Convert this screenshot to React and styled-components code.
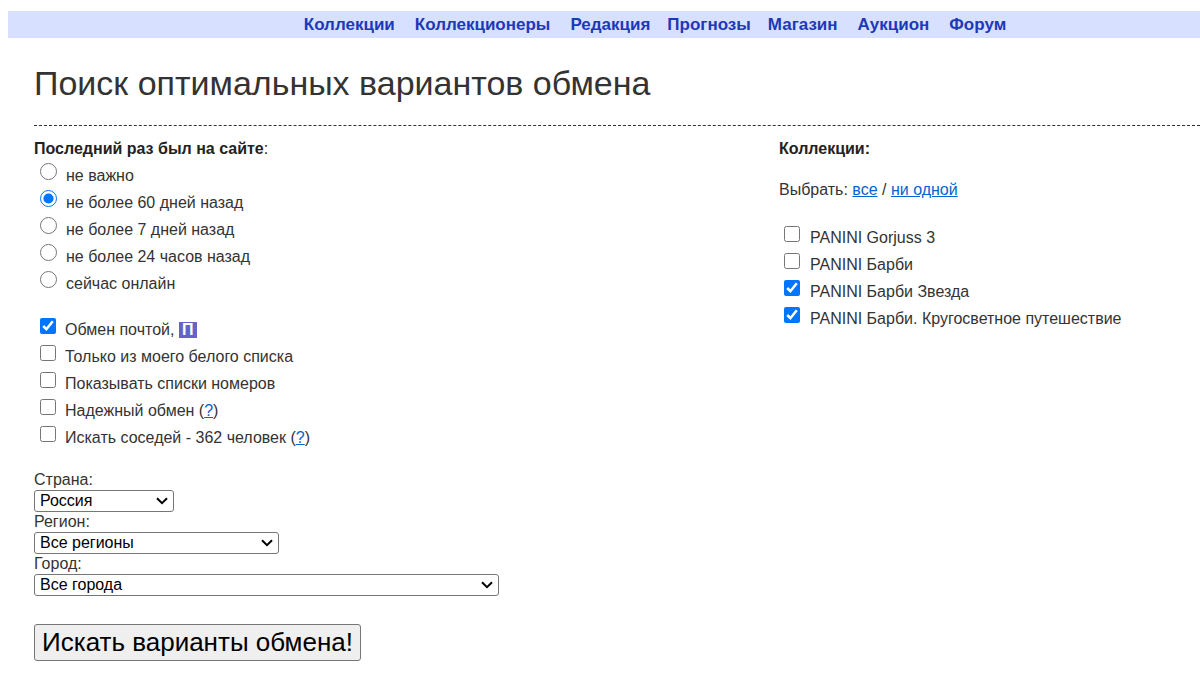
import styled, { createGlobalStyle } from "styled-components";
import { useState } from "react";

const GlobalStyle = createGlobalStyle`
  body {
    margin: 0;
    background: #fff;
    color: #333;
    font-family: "Liberation Sans", Arial, sans-serif;
    font-size: 16px;
    line-height: 20px;
  }
`;
const Page = styled.div`
  padding: 11px 0 16px 8px;
`;
const Nav = styled.nav`
  display: flex;
  justify-content: center;
  background-color: #d7e0ff;
  padding-left: 102px;
  line-height: 27px;
`;
const NavLink = styled.a`
  color: #1d39b7;
  font-size: 17px;
  font-weight: bold;
  text-decoration: none;
  margin-right: ${(props) => (props.$narrow ? 17 : 20)}px;
  &:last-child {
    margin-right: 0;
  }
`;
const Content = styled.main`
  padding-left: 26px;
`;
const Title = styled.h1`
  margin: 0;
  padding: 25px 0 22px;
  border-bottom: 1px dashed #333;
  font-size: 34px;
  font-weight: normal;
  line-height: 40px;
`;
const Columns = styled.form`
  display: grid;
  grid-template-columns: 745fr 421fr;
  padding-top: 13px;
`;
const Group = styled.fieldset`
  border: 0;
  margin: 0 0 19px;
  padding: 0;
  min-width: 0;
`;
const Legend = styled.legend`
  padding: 0;
  margin-bottom: 3px;
  color: #222;
`;
const Option = styled.div`
  display: flex;
  align-items: flex-start;
  gap: ${(props) => (props.$wide ? 10 : 9)}px;
  padding-left: ${(props) => (props.$wide ? 5 : 6)}px;
  line-height: 27px;
`;
const Radio = styled.input`
  width: 17px;
  height: 17px;
  margin: 1px 0 0;
`;
const Checkbox = styled.input`
  width: 16px;
  height: 16px;
  margin: 2px 0 0;
`;
const Link = styled.a`
  color: #0563cf;
  text-decoration: underline;
`;
const PostBadge = styled.span`
  display: inline-block;
  width: 18px;
  background-color: #6563c9;
  color: #fff;
  font-weight: bold;
  line-height: 16px;
  text-align: center;
`;
const Field = styled.div`
  display: flex;
  flex-direction: column;
  align-items: flex-start;
`;
const SelectBox = styled.div`
  display: grid;
  align-items: center;
  width: ${(props) => props.$width}px;
  max-width: 100%;
  > * {
    grid-area: 1 / 1;
  }
`;
const Select = styled.select`
  box-sizing: border-box;
  appearance: none;
  width: 100%;
  height: 22px;
  padding: 0 22px 2px 5px;
  border: 1px solid #767676;
  border-radius: 3px;
  background-color: #fff;
  color: #000;
  font-family: inherit;
  font-size: 16px;
`;
const Arrow = styled.svg`
  justify-self: end;
  margin-right: 6px;
  pointer-events: none;
`;
const SearchButton = styled.button`
  margin-top: 28px;
  padding: 2px 7px;
  border: 1px solid #767676;
  border-radius: 3px;
  background-color: #efefef;
  color: #000;
  font-family: inherit;
  font-size: 26px;
  line-height: 31px;
`;
const Choose = styled.p`
  margin: 0 0 24px;
  padding-top: 18px;
`;

const menu = [
  { title: "Коллекции" },
  { title: "Коллекционеры" },
  { title: "Редакция", narrow: true },
  { title: "Прогнозы", narrow: true },
  { title: "Магазин" },
  { title: "Аукцион" },
  { title: "Форум" },
];
const visits = [
  "не важно",
  "не более 60 дней назад",
  "не более 7 дней назад",
  "не более 24 часов назад",
  "сейчас онлайн",
];
const places = [
  { id: "country", label: "Страна:", value: "Россия", width: 140 },
  { id: "region", label: "Регион:", value: "Все регионы", width: 245 },
  { id: "city", label: "Город:", value: "Все города", width: 465 },
];
const collections = [
  "PANINI Gorjuss 3",
  "PANINI Барби",
  "PANINI Барби Звезда",
  "PANINI Барби. Кругосветное путешествие",
];

function CheckOption({ id, children, ...rest }) {
  return (
    <Option>
      <Checkbox type="checkbox" id={id} {...rest} />
      <span>{children}</span>
    </Option>
  );
}

export default function App() {
  const [selected, setSelected] = useState([2, 3]);
  function toggle(index) {
    setSelected((prev) =>
      prev.includes(index) ? prev.filter((i) => i !== index) : [...prev, index]
    );
  }
  function selectAll(e) {
    e.preventDefault();
    setSelected(collections.map((_, i) => i));
  }
  function selectNone(e) {
    e.preventDefault();
    setSelected([]);
  }

  return (
    <Page>
      <GlobalStyle />
      <Nav>
        {menu.map((item) => (
          <NavLink key={item.title} href="#" $narrow={item.narrow}>
            {item.title}
          </NavLink>
        ))}
      </Nav>
      <Content>
        <Title>Поиск оптимальных вариантов обмена</Title>
        <Columns onSubmit={(e) => e.preventDefault()}>
          <div>
            <Group>
              <Legend>
                <b>Последний раз был на сайте</b>:
              </Legend>
              {visits.map((title, i) => (
                <Option key={title}>
                  <Radio
                    type="radio"
                    name="visit"
                    id={"visit" + i}
                    defaultChecked={i === 1}
                  />
                  <label htmlFor={"visit" + i}>{title}</label>
                </Option>
              ))}
            </Group>
            <Group>
              <CheckOption id="post" defaultChecked>
                <label htmlFor="post">
                  Обмен почтой, <PostBadge>П</PostBadge>
                </label>
              </CheckOption>
              <CheckOption id="white">
                <label htmlFor="white">Только из моего белого списка</label>
              </CheckOption>
              <CheckOption id="numbers">
                <label htmlFor="numbers">Показывать списки номеров</label>
              </CheckOption>
              <CheckOption id="safe">
                <label htmlFor="safe">Надежный обмен</label> (
                <Link href="#">?</Link>)
              </CheckOption>
              <CheckOption id="near">
                <label htmlFor="near">Искать соседей - 362 человек</label> (
                <Link href="#">?</Link>)
              </CheckOption>
            </Group>
            {places.map((place) => (
              <Field key={place.id}>
                <label htmlFor={place.id}>{place.label}</label>
                <SelectBox $width={place.width}>
                  <Select id={place.id}>
                    <option>{place.value}</option>
                  </Select>
                  <Arrow width="12" height="8" viewBox="0 0 12 8" aria-hidden>
                    <path
                      d="M1 1.2 6 6.2 11 1.2"
                      fill="none"
                      stroke="#000"
                      strokeWidth="2"
                    />
                  </Arrow>
                </SelectBox>
              </Field>
            ))}
            <SearchButton type="submit">Искать варианты обмена!</SearchButton>
          </div>
          <div>
            <Group>
              <Legend>
                <b>Коллекции:</b>
              </Legend>
              <Choose>
                Выбрать:{" "}
                <Link href="#" onClick={selectAll}>
                  все
                </Link>{" "}
                /{" "}
                <Link href="#" onClick={selectNone}>
                  ни одной
                </Link>
              </Choose>
              {collections.map((title, i) => (
                <Option key={title} $wide>
                  <Checkbox
                    type="checkbox"
                    id={"collection" + i}
                    checked={selected.includes(i)}
                    onChange={() => toggle(i)}
                  />
                  <label htmlFor={"collection" + i}>{title}</label>
                </Option>
              ))}
            </Group>
          </div>
        </Columns>
      </Content>
    </Page>
  );
}
